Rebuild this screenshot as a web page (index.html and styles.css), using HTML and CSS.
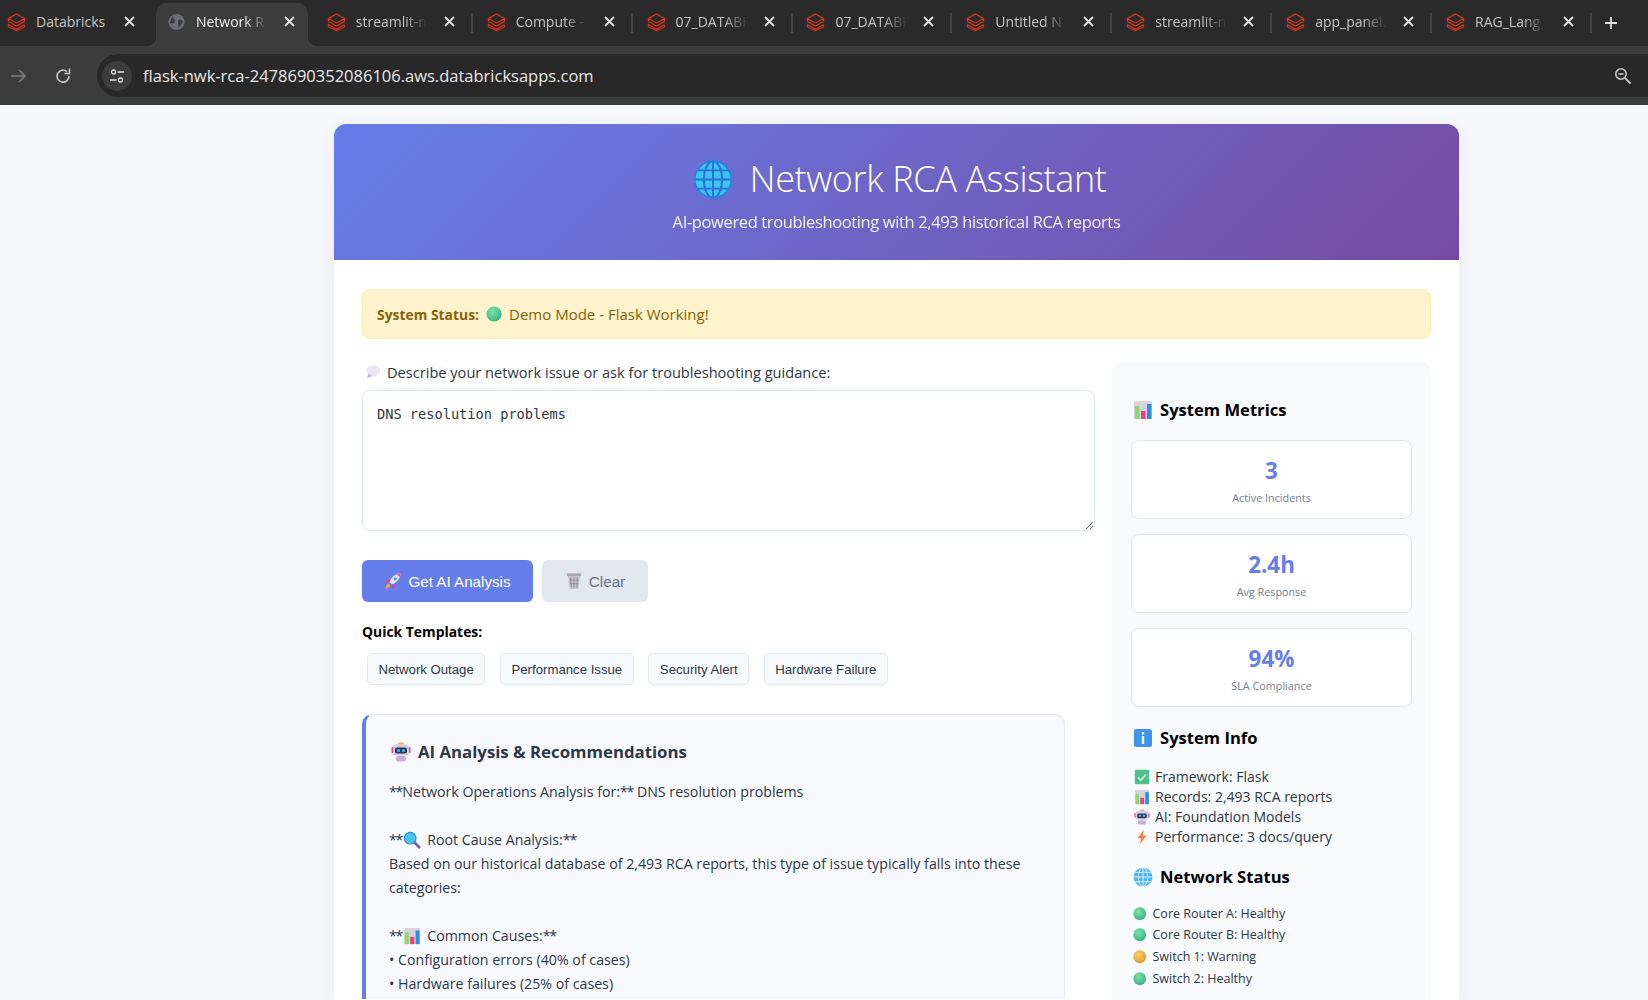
FILE: index.html
```html
<!DOCTYPE html>
<html>
<head>
    <meta charset="utf-8">
    <title>Network RCA Assistant</title>
    <link rel="stylesheet" href="styles.css">
</head>
<body>
<svg class="defs" width="0" height="0">
    <defs>
        <radialGradient id="gGreen" cx="40%" cy="35%" r="70%"><stop offset="0" stop-color="#7de3a8"/><stop offset="1" stop-color="#35b27e"/></radialGradient>
        <radialGradient id="gAmber" cx="40%" cy="35%" r="70%"><stop offset="0" stop-color="#f7d260"/><stop offset="1" stop-color="#dd9a35"/></radialGradient>
        <symbol id="db" viewBox="0 0 20 20">
            <path d="M10 1.5 18.5 6.2 10 11 1.5 6.2Z M18.5 9.5 10 14.3 1.5 9.5 M1.5 6.5V9.5 M18.5 6.5V9.5 M18.5 12.8 10 17.6 1.5 12.8V15.2L10 19 18.5 15.2V12.8" fill="none" stroke="#e0331f" stroke-width="1.2"/>
        </symbol>
        <symbol id="close" viewBox="0 0 11 11">
            <path d="M1 1 10 10M10 1 1 10" stroke="#e3e3e3" stroke-width="1.8"/>
        </symbol>
        <symbol id="globe" viewBox="0 0 32 32">
            <circle cx="16" cy="16" r="15" fill="#3cc4f5"/>
            <path d="M16 1V31 M1 16H31 M3.5 8.5H28.5 M3.5 23.5H28.5" stroke="#2a6fd6" stroke-width="1.6" fill="none"/>
            <ellipse cx="16" cy="16" rx="7.5" ry="15" fill="none" stroke="#2a6fd6" stroke-width="1.6"/>
            <circle cx="16" cy="16" r="15" fill="none" stroke="#2a82e0" stroke-width="1.4"/>
        </symbol>
        <symbol id="globe-light" viewBox="0 0 32 32">
            <circle cx="16" cy="16" r="15" fill="#4db5f2"/>
            <path d="M16 1V31 M1 16H31 M3.5 8.5H28.5 M3.5 23.5H28.5" stroke="#d6f0ff" stroke-width="1.6" fill="none"/>
            <ellipse cx="16" cy="16" rx="7.5" ry="15" fill="none" stroke="#d6f0ff" stroke-width="1.6"/>
        </symbol>
        <symbol id="bars" viewBox="0 0 20 20">
            <rect x="1" y="1" width="18" height="18" rx="1.5" fill="#d5d4de"/>
            <rect x="2" y="6" width="4.5" height="13" fill="#8cd96b"/>
            <rect x="8" y="11" width="4.5" height="8" fill="#ee3d7e"/>
            <rect x="14" y="4" width="4.5" height="15" fill="#2f8ee0"/>
        </symbol>
        <symbol id="robot" viewBox="0 0 20 20">
            <rect x="7" y="0.5" width="6" height="3" rx="1" fill="#f5b63f"/>
            <rect x="0.5" y="5" width="2" height="6" rx="1" fill="#f0418a"/>
            <rect x="17.5" y="5" width="2" height="6" rx="1" fill="#f0418a"/>
            <rect x="2" y="2.5" width="16" height="11" rx="3" fill="#d9c8e8"/>
            <rect x="4" y="5.5" width="12" height="6" rx="2" fill="#2f3554"/>
            <circle cx="7.5" cy="8.5" r="1.5" fill="#3cc4f5"/>
            <circle cx="12.5" cy="8.5" r="1.5" fill="#3cc4f5"/>
            <rect x="5" y="14" width="10" height="5.5" rx="2" fill="#c4acdc"/>
        </symbol>
        <symbol id="rocket" viewBox="0 0 20 20">
            <path d="M18.5 1.5C13 2 8.5 5.5 6 11L9 14C14.5 11.5 18 7 18.5 1.5Z" fill="#e8e4f0"/>
            <path d="M18.5 1.5C17.5 1.6 15.5 2.2 14.5 2.8L17.2 5.5C17.8 4.5 18.4 2.5 18.5 1.5Z" fill="#f0418a"/>
            <circle cx="12.5" cy="7.5" r="1.8" fill="#3aa5e8"/>
            <path d="M6.5 8 2.5 9 1.5 11.5 6 11Z M12 13.5 11 17.5 8.5 18.5 9 14Z" fill="#f0418a"/>
            <path d="M5.5 13 3 14 1.5 18.5 6 17 7 14.5Z" fill="#f6a33a"/>
        </symbol>
        <symbol id="trash" viewBox="0 0 20 20">
            <rect x="2" y="1.5" width="16" height="3" fill="#a9a6b2"/>
            <path d="M3.5 4.5H16.5L15 18.5H5Z" fill="#c2bfca"/>
            <path d="M6 6 7 17 M10 6V17 M14 6 13 17 M5 9H15 M5 13H15" stroke="#8f8c9a" stroke-width=".9" fill="none"/>
        </symbol>
        <symbol id="bubble" viewBox="0 0 20 20">
            <ellipse cx="10.5" cy="8.5" rx="8.5" ry="7" fill="#ece6f5"/>
            <path d="M4 12 2.5 18 9 15Z" fill="#c9b5e2"/>
        </symbol>
        <symbol id="info" viewBox="0 0 20 20">
            <rect x="1" y="1" width="18" height="18" rx="2.5" fill="#3f95ea"/>
            <rect x="8.8" y="8" width="2.4" height="8" fill="#e9f3fc"/>
            <rect x="8.8" y="4" width="2.4" height="2.6" fill="#e9f3fc"/>
        </symbol>
        <symbol id="check" viewBox="0 0 20 20">
            <rect x="1" y="1" width="18" height="18" rx="1.5" fill="#4fc08a"/>
            <path d="M5 10.5 8.5 14 15 7" fill="none" stroke="#eafbf1" stroke-width="1.8"/>
        </symbol>
        <symbol id="bolt" viewBox="0 0 20 20">
            <path d="M12 1 4.5 11.5H9L7.5 19 15.5 8H11Z" fill="#f57a3d"/>
        </symbol>
        <symbol id="lens" viewBox="0 0 20 20">
            <path d="M12 12 18 18" stroke="#7b5d9e" stroke-width="3" stroke-linecap="round"/>
            <circle cx="8" cy="8" r="6.5" fill="#4cc3ee" stroke="#2f8fc8" stroke-width="1.2"/>
        </symbol>
        <symbol id="dot-green" viewBox="0 0 20 20"><circle cx="10" cy="10" r="9.5" fill="url(#gGreen)"/></symbol>
        <symbol id="dot-amber" viewBox="0 0 20 20"><circle cx="10" cy="10" r="9.5" fill="url(#gAmber)"/></symbol>
    </defs>
</svg>

<div class="tabstrip">
    <div class="tab"><svg class="favicon"><use href="#db"/></svg><span class="tab-title fit">Databricks</span><svg class="tab-close"><use href="#close"/></svg></div>
    <div class="tab-sep hidden"></div>
    <div class="tab active">
        <svg class="favicon" viewBox="0 0 20 20"><circle cx="10" cy="10" r="8.5" fill="#6a6c70"/><path d="M6 3C5 6 9 7 8 10S3 11 3 11M12 17C12 14 16 13 17 9L13 7C11 8 12 11 12 17Z" fill="#3c3c3c"/></svg>
        <span class="tab-title">Network R</span><svg class="tab-close"><use href="#close"/></svg>
    </div>
    <div class="tab-sep hidden"></div>
    <div class="tab"><svg class="favicon"><use href="#db"/></svg><span class="tab-title">streamlit-n</span><svg class="tab-close"><use href="#close"/></svg></div>
    <div class="tab-sep"></div>
    <div class="tab"><svg class="favicon"><use href="#db"/></svg><span class="tab-title">Compute -</span><svg class="tab-close"><use href="#close"/></svg></div>
    <div class="tab-sep"></div>
    <div class="tab"><svg class="favicon"><use href="#db"/></svg><span class="tab-title">07_DATABF</span><svg class="tab-close"><use href="#close"/></svg></div>
    <div class="tab-sep"></div>
    <div class="tab"><svg class="favicon"><use href="#db"/></svg><span class="tab-title">07_DATABF</span><svg class="tab-close"><use href="#close"/></svg></div>
    <div class="tab-sep"></div>
    <div class="tab"><svg class="favicon"><use href="#db"/></svg><span class="tab-title">Untitled N</span><svg class="tab-close"><use href="#close"/></svg></div>
    <div class="tab-sep"></div>
    <div class="tab"><svg class="favicon"><use href="#db"/></svg><span class="tab-title">streamlit-n</span><svg class="tab-close"><use href="#close"/></svg></div>
    <div class="tab-sep"></div>
    <div class="tab"><svg class="favicon"><use href="#db"/></svg><span class="tab-title">app_panel.</span><svg class="tab-close"><use href="#close"/></svg></div>
    <div class="tab-sep"></div>
    <div class="tab"><svg class="favicon"><use href="#db"/></svg><span class="tab-title">RAG_Lang</span><svg class="tab-close"><use href="#close"/></svg></div>
    <div class="tab-sep"></div>
    <svg class="new-tab" viewBox="0 0 14 14"><path d="M7 1V13M1 7H13" stroke="#e3e3e3" stroke-width="1.8"/></svg>
</div>

<div class="toolbar">
    <svg class="nav-icon" viewBox="0 0 18 18"><path d="M2 9H16M10 3 16 9 10 15" fill="none" stroke="#7c7c7c" stroke-width="1.6"/></svg>
    <svg class="nav-icon reload" viewBox="0 0 18 18"><path d="M15 9A6 6 0 1 1 13 4.6" fill="none" stroke="#c7c7c7" stroke-width="1.6"/><path d="M15.5 1.5V6.5H10.5" fill="none" stroke="#c7c7c7" stroke-width="1.6"/></svg>
    <div class="omnibox">
        <span class="site-btn"><svg viewBox="0 0 16 16" width="16" height="16"><circle cx="4.5" cy="4" r="2" fill="none" stroke="#e3e3e3" stroke-width="1.3"/><path d="M8.5 4H15M1 12H7.5" stroke="#e3e3e3" stroke-width="1.3"/><circle cx="11.5" cy="12" r="2" fill="none" stroke="#e3e3e3" stroke-width="1.3"/></svg></span>
        <span class="url">flask-nwk-rca-2478690352086106.aws.databricksapps.com</span>
        <svg class="zoom-icon" viewBox="0 0 18 18"><circle cx="7" cy="7" r="5.2" fill="none" stroke="#c7c7c7" stroke-width="1.6"/><path d="M4.5 7H9.5" stroke="#c7c7c7" stroke-width="1.6"/><path d="M11 11 16.5 16.5" stroke="#c7c7c7" stroke-width="1.8"/></svg>
    </div>
</div>

<div class="page">
    <div class="container">
        <div class="header">
            <h1><svg class="emoji-title"><use href="#globe"/></svg>Network RCA Assistant</h1>
            <p>AI-powered troubleshooting with 2,493 historical RCA reports</p>
        </div>
        <div class="content">
            <div class="status"><strong>System Status:</strong> <svg class="emoji"><use href="#dot-green"/></svg> Demo Mode - Flask Working!</div>
            <div class="columns">
                <div class="main">
                    <div class="label"><svg class="emoji"><use href="#bubble"/></svg>Describe your network issue or ask for troubleshooting guidance:</div>
                    <textarea class="query">DNS resolution problems</textarea>
                    <div class="buttons">
                        <button class="btn btn-primary"><svg class="emoji-btn"><use href="#rocket"/></svg>Get AI Analysis</button>
                        <button class="btn btn-clear"><svg class="emoji-btn"><use href="#trash"/></svg>Clear</button>
                    </div>
                    <div class="quick-title">Quick Templates:</div>
                    <div class="templates">
                        <button class="template">Network Outage</button>
                        <button class="template">Performance Issue</button>
                        <button class="template">Security Alert</button>
                        <button class="template">Hardware Failure</button>
                    </div>
                    <div class="analysis">
                        <h3><svg class="emoji-big"><use href="#robot"/></svg>AI Analysis &amp; Recommendations</h3>
                        <div class="analysis-text">
                            <div><span class="stars">**</span>Network Operations Analysis for:<span class="stars">**</span> DNS resolution problems</div>
                            <div class="blank"></div>
                            <div><span class="stars">**</span><svg class="emoji-inline"><use href="#lens"/></svg>Root Cause Analysis:<span class="stars">**</span></div>
                            <div>Based on our historical database of 2,493 RCA reports, this type of issue typically falls into these categories:</div>
                            <div class="blank"></div>
                            <div><span class="stars">**</span><svg class="emoji-inline"><use href="#bars"/></svg>Common Causes:<span class="stars">**</span></div>
                            <div>• Configuration errors (40% of cases)</div>
                            <div>• Hardware failures (25% of cases)</div>
                        </div>
                    </div>
                </div>
                <div class="sidebar">
                    <h3 class="side-title first"><svg class="emoji-big"><use href="#bars"/></svg>System Metrics</h3>
                    <div class="metric"><div class="metric-value">3</div><div class="metric-label">Active Incidents</div></div>
                    <div class="metric"><div class="metric-value">2.4h</div><div class="metric-label">Avg Response</div></div>
                    <div class="metric"><div class="metric-value">94%</div><div class="metric-label">SLA Compliance</div></div>
                    <h3 class="side-title"><svg class="emoji-big"><use href="#info"/></svg>System Info</h3>
                    <ul class="info-list">
                        <li><svg class="emoji"><use href="#check"/></svg>Framework: Flask</li>
                        <li><svg class="emoji"><use href="#bars"/></svg>Records: 2,493 RCA reports</li>
                        <li><svg class="emoji"><use href="#robot"/></svg>AI: Foundation Models</li>
                        <li><svg class="emoji"><use href="#bolt"/></svg>Performance: 3 docs/query</li>
                    </ul>
                    <h3 class="side-title net"><svg class="emoji-big"><use href="#globe-light"/></svg>Network Status</h3>
                    <ul class="net-list">
                        <li><svg class="dot"><use href="#dot-green"/></svg>Core Router A: Healthy</li>
                        <li><svg class="dot"><use href="#dot-green"/></svg>Core Router B: Healthy</li>
                        <li><svg class="dot"><use href="#dot-amber"/></svg>Switch 1: Warning</li>
                        <li><svg class="dot"><use href="#dot-green"/></svg>Switch 2: Healthy</li>
                    </ul>
                </div>
            </div>
        </div>
    </div>
</div>
</body>
</html>
```

FILE: styles.css
```css
* {
    box-sizing: border-box;
}
html, body {
    margin: 0;
    height: 1000px;
    overflow: hidden;
}
body {
    font-family: "Open Sans", "Noto Sans", sans-serif;
    background: #f5f7fb;
    color: #2d3748;
}
.defs {
    display: block;
    height: 0;
}

/* browser chrome */
.tabstrip {
    height: 46px;
    background: #2a2a2a;
    display: flex;
    align-items: flex-end;
    padding-left: 0;
    overflow: hidden;
}
.tab {
    width: 152px;
    height: 43px;
    flex: none;
    display: flex;
    align-items: center;
    padding: 0 13px 6px 11px;
    color: #c4c4c4;
    font-size: 14px;
    border-radius: 10px 10px 0 0;
    position: relative;
}
.tab:first-child {
    width: 148px;
    padding-left: 7px;
}
.tab.active {
    background: #3c3c3c;
    color: #f2f2f2;
}
.tab.active::before,
.tab.active::after {
    content: "";
    position: absolute;
    bottom: 0;
    width: 8px;
    height: 8px;
}
.tab.active::before {
    left: -8px;
    background: radial-gradient(circle at 0 0, transparent 7.5px, #3c3c3c 8px);
}
.tab.active::after {
    right: -8px;
    background: radial-gradient(circle at 100% 0, transparent 7.5px, #3c3c3c 8px);
}
.favicon {
    width: 19px;
    height: 20px;
    flex: none;
    margin-right: 10px;
}
.tab-title {
    flex: 1;
    overflow: hidden;
    white-space: nowrap;
    -webkit-mask-image: linear-gradient(to right, #000 60%, transparent 90%);
    mask-image: linear-gradient(to right, #000 60%, transparent 90%);
}
.tab-title.fit {
    -webkit-mask-image: none;
    mask-image: none;
}
.tab-close {
    width: 11px;
    height: 11px;
    flex: none;
    margin-left: 8px;
}
.tab-sep {
    width: 2px;
    height: 20px;
    flex: none;
    margin: 0 2.9px 13px 3px;
    background: #444;
}
.tab-sep.hidden {
    visibility: hidden;
}
.new-tab {
    width: 14px;
    height: 14px;
    margin: 0 0 16px 9px;
    flex: none;
}
.toolbar {
    height: 59px;
    background: #3c3c3c;
    display: flex;
    align-items: center;
    padding: 0 0 0 9px;
}
.nav-icon {
    width: 18px;
    height: 18px;
    flex: none;
    margin-right: 27px;
}
.nav-icon.reload {
    margin-right: 25px;
}
.omnibox {
    flex: 1;
    height: 43px;
    background: #282828;
    border-radius: 21px 0 0 21px;
    display: flex;
    align-items: center;
    padding-left: 5px;
}
.site-btn {
    width: 30px;
    height: 30px;
    border-radius: 50%;
    background: #3c3c3c;
    display: flex;
    align-items: center;
    justify-content: center;
    margin-right: 11px;
}
.url {
    color: #e8e8e8;
    font-size: 16.5px;
    flex: 1;
}
.zoom-icon {
    width: 18px;
    height: 18px;
    margin-right: 16px;
}

/* page */
.page {
    padding: 19px 0 0 334px;
    height: 895px;
    overflow: hidden;
}
.container {
    width: 1125px;
    background: #fff;
    border-radius: 12px 12px 0 0;
    box-shadow: 0 4px 20px rgba(0, 0, 0, 0.05);
    height: 876px;
}
.header {
    height: 136px;
    background: linear-gradient(135deg, #667eea 0%, #764ba2 100%);
    border-radius: 12px 12px 0 0;
    color: #fff;
    text-align: center;
    padding-top: 30px;
}
.header h1 {
    margin: 0;
    font-size: 36px;
    font-weight: 300;
    letter-spacing: -0.38px;
    line-height: 50px;
    display: flex;
    justify-content: center;
    align-items: center;
    padding-left: 6px;
}
.emoji-title {
    width: 40px;
    height: 39px;
    margin-right: 17px;
}
.header p {
    margin: 6px 0 0;
    font-size: 16.5px;
    letter-spacing: -0.37px;
    line-height: 24px;
    opacity: .9;
}
.content {
    padding: 29px 28px 0;
}
.status {
    height: 50px;
    background: #fff3cd;
    border: 1px solid #ffeaa7;
    border-radius: 8px;
    padding-left: 14px;
    display: flex;
    align-items: center;
    gap: 7px;
    color: #856404;
    font-size: 15px;
}
.status strong {
    font-size: 13.9px;
}
.emoji {
    width: 16px;
    height: 16px;
    flex: none;
}
.emoji-btn {
    width: 18px;
    height: 18px;
    flex: none;
}
.emoji-big {
    width: 20px;
    height: 20px;
    flex: none;
    margin-right: 7px;
}
.emoji-inline {
    width: 18px;
    height: 18px;
    margin: 0 6px 0 1px;
    vertical-align: -4px;
}
.columns {
    display: grid;
    grid-template-columns: 1fr 319px;
    gap: 17px;
    margin-top: 23px;
}

/* left column */
.label {
    font-size: 14.6px;
    font-weight: 500;
    line-height: 20px;
    display: flex;
    align-items: center;
    gap: 6px;
    padding-left: 3px;
}
.query {
    display: block;
    width: 100%;
    height: 141px;
    margin-top: 8px;
    padding: 15px 14px;
    font-family: "DejaVu Sans Mono", monospace;
    font-size: 13.65px;
    color: #2d3748;
    border: 1px solid #e2e8f0;
    border-radius: 8px;
    background: #fff;
}
.buttons {
    display: flex;
    gap: 9px;
    margin-top: 29px;
}
.btn {
    height: 42px;
    border: 0;
    border-radius: 6px;
    font-family: "Liberation Sans", sans-serif;
    font-size: 15.2px;
    display: flex;
    align-items: center;
    justify-content: center;
    gap: 6px;
}
.btn-primary {
    width: 171px;
    background: #667eea;
    color: #fff;
}
.btn-clear {
    width: 106px;
    background: #e2e8f0;
    color: #6b7280;
}
.quick-title {
    font-size: 13.9px;
    font-weight: 700;
    color: #000;
    margin-top: 20px;
    line-height: 20px;
}
.templates {
    display: flex;
    gap: 14.7px;
    margin: 11px 0 0 5px;
}
.template {
    height: 32px;
    padding: 0 10.5px;
    background: #f7fafc;
    border: 1px solid #e2e8f0;
    border-radius: 5px;
    font-family: "Liberation Sans", sans-serif;
    font-size: 13.2px;
    color: #2d3748;
}
.analysis {
    margin: 29px 30px 0 0;
    background: #f8f9ff;
    border: 1px solid #e8ebf5;
    border-left: 4px solid #667eea;
    border-bottom: 0;
    border-radius: 10px 10px 0 0;
    padding: 23px 22px 0 23px;
    height: 285px;
}
.analysis h3 {
    margin: 0 0 14px;
    padding-left: 2px;
    font-size: 16.8px;
    font-weight: 700;
    line-height: 28px;
    display: flex;
    align-items: center;
}
.analysis-text {
    font-size: 14.2px;
    line-height: 24px;
    color: #2d3748;
}
.stars {
    letter-spacing: -1.2px;
}
.blank {
    height: 24px;
}

/* sidebar */
.sidebar {
    background: #f8fafc;
    border-radius: 10px 10px 0 0;
    padding: 0 19px;
    height: 638px;
}
.side-title {
    margin: 0;
    font-size: 16.6px;
    font-weight: 700;
    color: #000;
    line-height: 28px;
    display: flex;
    align-items: center;
    padding-left: 2px;
    margin-top: 17px;
}
.side-title.first {
    margin-top: 34px;
    margin-bottom: 16px;
}
.side-title.net {
    margin-top: 15.5px;
}
.metric {
    height: 79px;
    background: #fff;
    border: 1px solid #e2e8f0;
    border-radius: 8px;
    margin-bottom: 15px;
    text-align: center;
    padding-top: 15px;
}
.metric-value {
    font-size: 22.4px;
    font-weight: 700;
    color: #667eea;
    line-height: 30px;
}
.metric-label {
    font-size: 10.8px;
    color: #718096;
    line-height: 16px;
    margin-top: 4px;
}
.info-list, .net-list {
    list-style: none;
    margin: 0;
    padding: 0;
}
.info-list {
    margin-top: 15px;
    padding-left: 3px;
    font-size: 14px;
    line-height: 20px;
}
.info-list li, .net-list li {
    display: flex;
    align-items: center;
    gap: 5px;
}
.net-list {
    margin-top: 12px;
    font-size: 12.5px;
    line-height: 21.7px;
    padding-left: 2px;
}
.net-list li {
    gap: 6px;
}
.dot {
    width: 13.5px;
    height: 13.5px;
    flex: none;
}
```
